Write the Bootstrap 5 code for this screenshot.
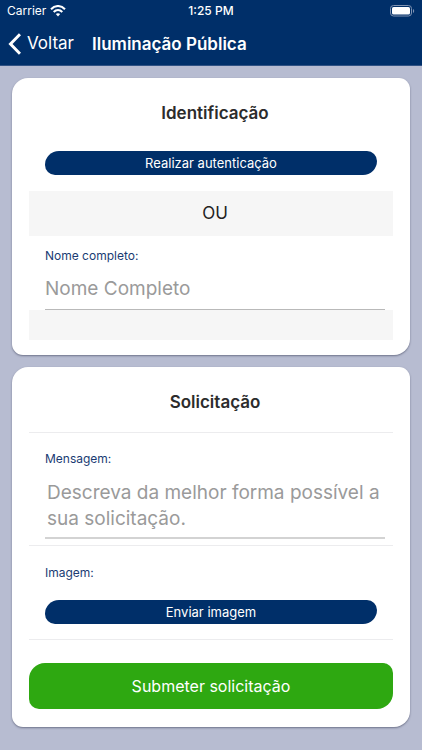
<!DOCTYPE html>
<html lang="pt-BR">
<head>
<meta charset="utf-8">
<meta name="viewport" content="width=device-width, initial-scale=1">
<title>Iluminação Pública</title>
<link href="https://cdn.jsdelivr.net/npm/bootstrap@5.3.0/dist/css/bootstrap.min.css" rel="stylesheet">
<style>
  :root { --navy: #002f69; }
  body { background: #b7bcd1; font-family: Inter, "Liberation Sans", sans-serif; color: #2c2c2c; }
  .app-header { background: var(--navy); border-bottom: 1px solid #305284; }
  .status-bar { height: 22px; padding: 0 7px; font-size: 12px; line-height: 22px; }
  .clock { font-weight: 500; }
  .title-bar { height: 43px; padding: 0 8px; gap: 18px; }
  .back-link { font-size: 17px; gap: 6px; }
  .screen-title { font-size: 17px; line-height: 24px; font-weight: 600; }
  .page-body { padding: 12px; gap: 12px; }
  .panel { background: #fff; border-radius: 16px 11px 16px 11px; padding: 0 17px; box-shadow: 0 1px 2px rgba(40, 44, 70, .5); }
  .panel-request { padding-bottom: 18px; }
  .panel-title { font-size: 17px; line-height: 24px; font-weight: 600; padding: 23px 0 18px 8px; }
  .field { padding: 0 8px 0 16px; }
  .action { padding: 0 16px; }
  .btn-navy { --bs-btn-color: #fff; --bs-btn-bg: var(--navy); --bs-btn-hover-color: #fff; --bs-btn-hover-bg: #013b82; --bs-btn-active-bg: #00234f; --bs-btn-active-color: #fff;
    height: 24px; padding: 0; border: 0; font-size: 13px; line-height: 24px; border-radius: 14px 10px 14px 10px; }
  .btn-send { --bs-btn-color: #fff; --bs-btn-bg: #2ea811; --bs-btn-hover-color: #fff; --bs-btn-hover-bg: #28940f; --bs-btn-active-bg: #237f0d; --bs-btn-active-color: #fff;
    height: 46px; padding: 0; border: 0; font-size: 16px; border-radius: 16px 10px 16px 10px; }
  .band { background: #f6f6f6; }
  .band-or { height: 45px; padding-left: 8px; font-size: 17px; line-height: 45px; color: #222; }
  .band-end { height: 30px; margin-bottom: 15px; }
  .caption { color: #1a3b73; font-size: 12px; line-height: 18px; }
  .caption-name { padding-top: 11px; }
  .line-input { border: 0; border-bottom: 1px solid #b9b9b9; border-radius: 0; padding: 0; font-size: 19px; line-height: 26px; background: transparent; }
  .line-input::placeholder { color: #9a9a9a; opacity: 1; }
  .name-input { height: 45px; padding-top: 2px; }
  .message-input { height: 59px; padding: 0 2px; border-bottom: 2px solid #d3d3d3; resize: none; overflow: hidden; }
  .ruled { border-top: 1px solid #ececee; }
  .message-group { padding-top: 17px; padding-bottom: 6px; }
  .message-group .caption { margin-bottom: 12px; }
  .image-group { padding-top: 18px; padding-bottom: 15px; }
  .image-group .caption { margin-bottom: 18px; }
  .send-group { padding-top: 23px; }
</style>
</head>
<body>
<header class="app-header text-white">
  <div class="status-bar row g-0">
    <div class="col d-flex align-items-center gap-1">
      <span>Carrier</span>
      <svg width="16" height="12" viewBox="0 0 16 12" fill="none" stroke="#fff" stroke-width="2" aria-hidden="true"><path d="M1 4.2C5-.1 11-.1 15 4.2M3.7 7c2.6-2.7 6-2.7 8.6 0"/><path d="M5.8 9.1c1.3-1.3 3.1-1.3 4.4 0L8 11.4z" fill="#fff" stroke="none"/></svg>
    </div>
    <div class="col-auto clock">1:25 PM</div>
    <div class="col d-flex align-items-center justify-content-end">
      <svg width="25" height="12" viewBox="0 0 25 12" aria-hidden="true"><rect x=".5" y=".5" width="21" height="10.5" rx="3" fill="none" stroke="#8093b2"/><rect x="2" y="2" width="18" height="7.5" rx="1.6" fill="#fff"/><path d="M23 4v4c1.6-.6 1.6-3.4 0-4z" fill="#8093b2"/></svg>
    </div>
  </div>
  <nav class="title-bar d-flex align-items-center">
    <a href="#" class="back-link d-flex align-items-center text-white text-decoration-none">
      <svg width="13" height="22" viewBox="0 0 13 22" fill="none" stroke="#fff" stroke-width="3" aria-hidden="true"><path d="M12 1.2 2.5 11 12 20.8"/></svg>
      <span>Voltar</span>
    </a>
    <h1 class="screen-title mb-0">Iluminação Pública</h1>
  </nav>
</header>
<main class="page-body d-flex flex-column">
  <section class="panel">
    <h2 class="panel-title text-center mb-0">Identificação</h2>
    <div class="action pt-2 pb-3"><button type="button" class="btn btn-navy w-100 d-block">Realizar autenticação</button></div>
    <div class="band band-or text-center">OU</div>
    <div class="field">
      <label for="nome" class="caption caption-name d-block">Nome completo:</label>
      <input id="nome" type="text" class="form-control line-input name-input" placeholder="Nome Completo">
    </div>
    <div class="band band-end"></div>
  </section>
  <section class="panel panel-request">
    <h2 class="panel-title text-center mb-0">Solicitação</h2>
    <div class="ruled field message-group">
      <label for="mensagem" class="caption d-block">Mensagem:</label>
      <textarea id="mensagem" class="form-control line-input message-input" placeholder="Descreva da melhor forma possível a sua solicitação."></textarea>
    </div>
    <div class="ruled action image-group">
      <label for="imagem" class="caption d-block">Imagem:</label>
      <button id="imagem" type="button" class="btn btn-navy w-100 d-block">Enviar imagem</button>
    </div>
    <div class="ruled send-group"><button type="submit" class="btn btn-send w-100 d-block">Submeter solicitação</button></div>
  </section>
</main>
<script src="https://cdn.jsdelivr.net/npm/bootstrap@5.3.0/dist/js/bootstrap.bundle.min.js"></script>
</body>
</html>
